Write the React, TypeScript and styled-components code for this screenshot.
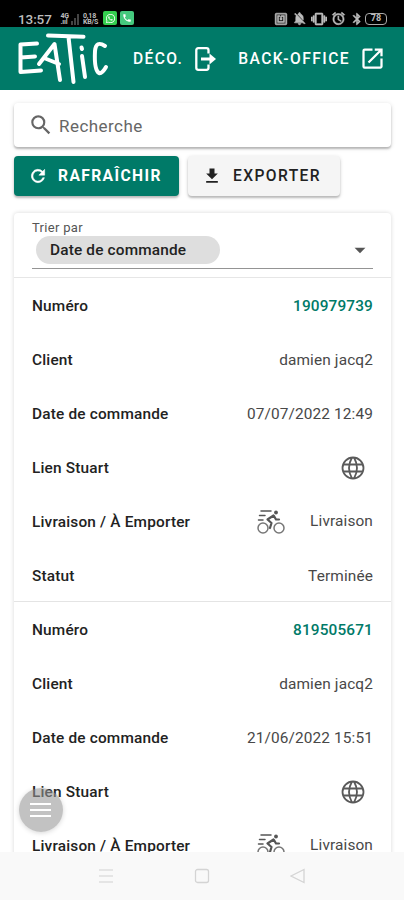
import React from "react";
import styled, { createGlobalStyle } from "styled-components";
import { MdSearch, MdFileDownload, MdOpenInNew, MdArrowDropDown, MdNfc, MdNotificationsOff, MdVibration, MdAlarm, MdBluetooth, MdPhone, MdWhatsapp } from "react-icons/md";

const GlobalStyle = createGlobalStyle`
  * { box-sizing: border-box; }
  body { margin: 0; background: #fff; font-family: Roboto, sans-serif; color: #222; overflow: hidden; }
  svg { display: block; flex: none; }
`;

const Screen = styled.div`
  width: 404px;
  height: 900px;
  display: flex;
  flex-direction: column;
  overflow: hidden;
  background: #fff;
`;

const StatusBar = styled.div`
  height: 27px;
  flex: none;
  background: #000;
  color: #bdbdbd;
  display: flex;
  align-items: flex-start;
  padding: 11px 17px 0 18px;
`;
const Clock = styled.span`
  font-size: 13.5px;
  line-height: 17px;
  font-weight: 500;
  letter-spacing: -0.1px;
  width: 41px;
`;
const TinyStack = styled.span<{ $w: number }>`
  width: ${(p) => p.$w}px;
  font-size: 7px;
  line-height: 6px;
  font-weight: 700;
  letter-spacing: -0.2px;
  padding-top: 2px;
  white-space: pre;
`;
const Signal = styled.svg`
  margin: 2px 3px 0 0;
`;
const AppBadge = styled.span<{ $bg: string }>`
  width: 14px;
  height: 14px;
  margin-right: 3px;
  border-radius: 2px;
  background: ${(p) => p.$bg};
  color: #fff;
  display: grid;
  place-items: center;
`;
const StatusIcons = styled.div`
  margin-left: auto;
  display: flex;
  align-items: center;
  gap: 4px;
  height: 15px;

  path:not([fill="none"]) {
    stroke: currentColor;
    stroke-width: 0.9px;
  }
`;
const Battery = styled.span`
  width: 22px;
  height: 12px;
  margin-left: -3px;
  border: 1.5px solid #aaa;
  border-radius: 4px;
  font-size: 9px;
  line-height: 9px;
  font-weight: 700;
  text-align: center;
`;

const Header = styled.header`
  height: 63px;
  flex: none;
  background: #007a68;
  color: #fff;
  display: flex;
  align-items: center;
  padding: 0 17px;
`;
const NavLink = styled.a<{ $ml: number; $gap: number; $track: number }>`
  display: flex;
  align-items: center;
  margin-left: ${(p) => p.$ml}px;
  gap: ${(p) => p.$gap}px;
  font-size: 15.6px;
  font-weight: 500;
  letter-spacing: ${(p) => p.$track}px;
  white-space: nowrap;
`;

const Main = styled.main`
  flex: 1;
  min-height: 0;
  overflow: hidden;
  padding: 13px 13px 0 14px;
`;
const SearchField = styled.div`
  height: 44px;
  display: flex;
  align-items: center;
  gap: 5px;
  padding: 2px 0 0 14px;
  border-radius: 4px;
  background: #fff;
  box-shadow: 0 2px 2px rgba(0, 0, 0, 0.22), 0 1px 5px rgba(0, 0, 0, 0.14);
  color: #666;

  svg {
    position: relative;
    top: -1px;
  }
`;
const SearchText = styled.span`
  font-size: 17px;
  letter-spacing: 0.45px;
`;
const Actions = styled.div`
  display: flex;
  gap: 9px;
  margin: 9px 0 17px;
`;
const Button = styled.button<{ $primary?: boolean }>`
  width: ${(p) => (p.$primary ? 165 : 152)}px;
  height: 40px;
  display: flex;
  align-items: center;
  gap: ${(p) => (p.$primary ? 10 : 11)}px;
  padding: 0 0 0 14px;
  border: 0;
  border-radius: 4px;
  background: ${(p) => (p.$primary ? "#007a68" : "#f5f5f5")};
  color: ${(p) => (p.$primary ? "#fff" : "#222")};
  font: ${(p) => (p.$primary ? 700 : 500)} 15.6px Roboto, sans-serif;
  letter-spacing: 1.4px;
  box-shadow: 0 2px 2px rgba(0, 0, 0, 0.2), 0 1px 4px rgba(0, 0, 0, 0.14);
`;

const Card = styled.section`
  border-radius: 4px;
  background: #fff;
  box-shadow: 0 0 4px rgba(0, 0, 0, 0.16);
`;
const SortArea = styled.div`
  height: 65px;
  padding: 7px 18px 0;
  border-bottom: 1px solid #e6e6e6;
`;
const SortLabel = styled.div`
  font-size: 13px;
  line-height: 15px;
  letter-spacing: 0.3px;
  color: #555;
`;
const SortSelect = styled.div`
  height: 34px;
  display: flex;
  justify-content: space-between;
  align-items: flex-start;
  padding: 1px 0 0 4px;
  border-bottom: 1px solid #949494;
`;
const Chip = styled.span`
  width: 184px;
  height: 28px;
  padding-left: 14px;
  border-radius: 14px;
  background: #dedede;
  font-size: 15.4px;
  line-height: 28px;
  font-weight: 500;
  letter-spacing: 0.16px;
`;
const Caret = styled(MdArrowDropDown)`
  margin-top: 1px;
  color: #555;
`;
const Order = styled.div`
  height: 324px;
  border-bottom: 1px solid #e4e4e4;
`;
const Row = styled.div`
  height: 54px;
  padding: 1px 18px 0;
  display: flex;
  align-items: center;
  justify-content: space-between;
  font-size: 15.4px;
`;
const RowLabel = styled.span`
  font-weight: 500;
  letter-spacing: 0.18px;
`;
const RowValue = styled.span<{ $accent?: boolean; $inset?: number }>`
  display: flex;
  align-items: center;
  gap: 25px;
  padding-right: ${(p) => p.$inset ?? 0}px;
  color: ${(p) => (p.$accent ? "#007a68" : "#484848")};
  font-weight: ${(p) => (p.$accent ? 500 : 400)};
  letter-spacing: 0.13px;
`;
const Delivery = styled.span`
  position: relative;
  top: -1px;
`;

const MenuFab = styled.button`
  position: absolute;
  left: 19px;
  top: 788px;
  width: 44px;
  height: 44px;
  border: 0;
  padding: 0;
  border-radius: 50%;
  background: rgba(150, 150, 150, 0.58);
  box-shadow: 0 1px 5px rgba(0, 0, 0, 0.16);
  display: grid;
  place-items: center;
`;
const SystemNav = styled.nav`
  height: 48px;
  flex: none;
  background: #f9f9f9;
  display: grid;
  grid-template-columns: 96px 96px 96px;
  justify-content: center;
  justify-items: center;
  align-items: center;
`;

const Logo = () => (
  <svg width="93" height="54" viewBox="17 32 93 54" fill="none" stroke="#fff" strokeWidth="4" strokeLinecap="round" strokeLinejoin="round">
    <path d="M37 43.500L20.500 44.500L20.500 72L41 70.500M21 57.500L35 56.500" />
    <path d="M39 64L54.500 44L60 80M44 58L59 64" />
    <path d="M48 35.500L83.500 36.800M68.500 37L73.500 82M82 56L85 77M81.500 47.500L82 49" />
    <path d="M105 46Q96 40 95 51Q94 70 99 73Q102 74 106 67" />
  </svg>
);
const LogoutIcon = () => (
  <svg width="22" height="26" viewBox="0 0 22 26" fill="none" stroke="#fff" strokeWidth="2.300">
    <path d="M13.500 7.500V4.200Q13.500 2.200 11.500 2.200H3.300Q1.300 2.200 1.300 4.200V21.800Q1.300 23.800 3.300 23.800H11.500Q13.500 23.800 13.500 21.800V18.500" />
    <path d="M6 13H16" strokeWidth="3" />
    <path d="M14.500 7.500L21 13L14.500 18.500Z" fill="#fff" stroke="none" />
  </svg>
);
const RefreshIcon = () => (
  <svg width="20" height="20" viewBox="0 0 24 24" fill="currentColor" stroke="currentColor" strokeWidth="0.6">
    <path d="M17.650 6.350A8 8 0 1 0 19.730 14H17.650A6 6 0 1 1 16.220 7.780L13 11H20V4Z" />
  </svg>
);
const GlobeIcon = () => (
  <svg width="24" height="24" viewBox="0 0 24 24" fill="none" stroke="#5a5a5a" strokeWidth="1.800">
    <circle cx="12" cy="12" r="10.500" />
    <path d="M2.500 8.500H21.500M2.500 15.500H21.500M11 1.500Q5 12 11 22.500M13 1.500Q19 12 13 22.500" />
  </svg>
);
const BikeIcon = () => (
  <svg width="28" height="26" viewBox="0 0 28 26" fill="none" stroke="#555" strokeLinecap="round" strokeLinejoin="round">
    <g strokeWidth="1.500">
      <circle cx="6" cy="19" r="5" stroke="#777" />
      <circle cx="22" cy="19" r="5" stroke="#777" />
      <path d="M4 2H14M2.500 6.500H8M1.500 11H6" />
    </g>
    <path d="M16.500 6.500L10.500 10.500L14.500 14L13 19M17 7L19 10.500H22" strokeWidth="2.200" />
    <circle cx="19" cy="3.500" r="1.900" fill="#555" stroke="none" />
  </svg>
);
const SignalIcon = () => (
  <Signal width="9" height="12" viewBox="0 0 9 12" fill="#444"><path d="M0 8h2v4H0zM3 5h2v7H3zM6 1h2v11H6z" /></Signal>
);

type OrderData = { number: string; client: string; date: string };
const orders: OrderData[] = [
  { number: "190979739", client: "damien jacq2", date: "07/07/2022 12:49" },
  { number: "819505671", client: "damien jacq2", date: "21/06/2022 15:51" },
];

const OrderCard = ({ number, client, date }: OrderData) => (
  <Order>
    <Row><RowLabel>Numéro</RowLabel><RowValue $accent>{number}</RowValue></Row>
    <Row><RowLabel>Client</RowLabel><RowValue>{client}</RowValue></Row>
    <Row><RowLabel>Date de commande</RowLabel><RowValue>{date}</RowValue></Row>
    <Row><RowLabel>Lien Stuart</RowLabel><RowValue $inset={8}><GlobeIcon /></RowValue></Row>
    <Row><RowLabel>Livraison / À Emporter</RowLabel><RowValue><BikeIcon /><Delivery>Livraison</Delivery></RowValue></Row>
    <Row><RowLabel>Statut</RowLabel><RowValue>Terminée</RowValue></Row>
  </Order>
);

export default function App() {
  return (
    <Screen>
      <GlobalStyle />
      <StatusBar>
        <Clock>13:57</Clock>
        <TinyStack $w={12}>{" 4G\n .ııl"}</TinyStack>
        <SignalIcon />
        <TinyStack $w={20}>{"0,18\nKB/S"}</TinyStack>
        <AppBadge $bg="#35cf50"><MdWhatsapp size={11} /></AppBadge>
        <AppBadge $bg="#45c97e"><MdPhone size={10} /></AppBadge>
        <StatusIcons>
          <MdNfc size={14} /><MdNotificationsOff size={15} /><MdVibration size={16} /><MdAlarm size={15} /><MdBluetooth size={14} />
          <Battery>78</Battery>
        </StatusIcons>
      </StatusBar>
      <Header>
        <Logo />
        <NavLink $ml={23} $gap={12} $track={1.35}>DÉCO.<LogoutIcon /></NavLink>
        <NavLink $ml={21} $gap={9} $track={1.45}>BACK-OFFICE<MdOpenInNew size={27} /></NavLink>
      </Header>
      <Main>
        <SearchField><MdSearch size={26} /><SearchText>Recherche</SearchText></SearchField>
        <Actions>
          <Button $primary><RefreshIcon />RAFRAÎCHIR</Button>
          <Button><MdFileDownload size={20} />EXPORTER</Button>
        </Actions>
        <Card>
          <SortArea>
            <SortLabel>Trier par</SortLabel>
            <SortSelect><Chip>Date de commande</Chip><Caret size={26} /></SortSelect>
          </SortArea>
          {orders.map((o) => <OrderCard key={o.number} {...o} />)}
        </Card>
      </Main>
      <SystemNav>
        <svg width="16" height="16" viewBox="0 0 16 16" stroke="#dedede" strokeWidth="1.300"><path d="M1 2H15M1 8H15M1 14H15" /></svg>
        <svg width="16" height="16" viewBox="0 0 16 16" fill="none" stroke="#d4d4d4" strokeWidth="1.300"><rect x="1.500" y="1.500" width="13" height="13" rx="2" /></svg>
        <svg width="16" height="16" viewBox="0 0 16 16" fill="none" stroke="#d4d4d4" strokeWidth="1.300"><path d="M1 8L14 1.500V14.500Z" /></svg>
      </SystemNav>
      <MenuFab aria-label="Menu">
        <svg width="22" height="18" viewBox="0 0 22 18" stroke="#fff" strokeWidth="2.200"><path d="M0 3H21M0 9H21M0 15H21" /></svg>
      </MenuFab>
    </Screen>
  );
}
